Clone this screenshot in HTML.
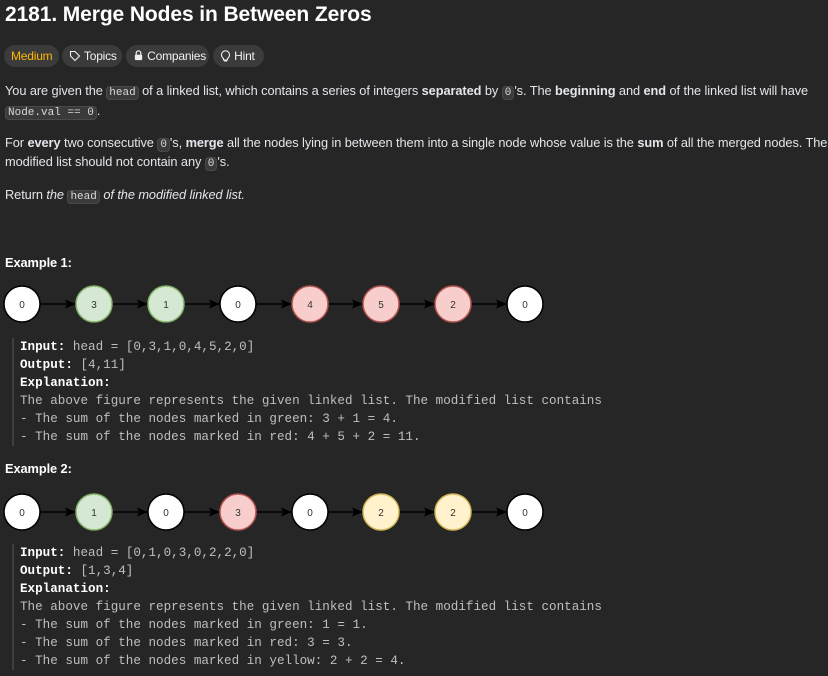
<!DOCTYPE html>
<html><head><meta charset="utf-8"><style>
body{margin:0;background:#262626;color:#eff1f6;font-family:"Liberation Sans",sans-serif;width:828px;height:676px;overflow:hidden;position:relative}
.a{position:absolute;white-space:nowrap}
h1{position:absolute;left:5px;top:3px;margin:0;font-size:21px;font-weight:bold;color:#fff;letter-spacing:-0.1px}
.tag{position:absolute;top:45px;height:22px;border-radius:11px;background:#3b3b3b;font-size:12px;line-height:22px;padding:0 7px;box-sizing:border-box;white-space:nowrap;letter-spacing:-0.2px}
p{position:absolute;left:5px;margin:0;font-size:12.8px;letter-spacing:-0.08px;line-height:19px;color:#eff1f6f0;white-space:nowrap}
code{font-family:"Liberation Mono",monospace;font-size:11px;letter-spacing:0;background:#3a3a3a;border:1px solid #4a4a4a;border-radius:4px;padding:0 2px;color:#d8d8d8}
.pre{position:absolute;left:12px;border-left:2px solid #3e3e3e;padding-left:6px;font-family:"Liberation Mono",monospace;font-size:12.6px;line-height:18px;color:#bfbfbf;white-space:pre}
.pre b{color:#fff}
</style></head><body>
<h1>2181. Merge Nodes in Between Zeros</h1>
<div class="tag" style="left:4px;width:55px;color:#ffb800">Medium</div>
<div class="tag" style="left:62px;width:60px">
<svg width="12" height="12" viewBox="0 0 12 12" style="vertical-align:-2px"><path d="M1.5 1.5h4.5l4.5 4.5-4.5 4.5-4.5-4.5z" fill="none" stroke="#eee" stroke-width="1.1"/></svg> Topics</div>
<div class="tag" style="left:126px;width:83px"><svg width="11" height="11" viewBox="0 0 12 12" style="vertical-align:-1px"><path d="M3.5 5V3.5a2.5 2.5 0 015 0V5" fill="none" stroke="#eee" stroke-width="1.4"/><rect x="2" y="5" width="8" height="6" rx="1" fill="#eee"/></svg> Companies</div>
<div class="tag" style="left:213px;width:51px"><svg width="11" height="12" viewBox="0 0 11 12" style="vertical-align:-2px"><path d="M3.5 8.5C2 7.5 1.5 6 1.5 4.8a4 4 0 018 0c0 1.2-.5 2.7-2 3.7v1.5h-4z M4 11h3" fill="none" stroke="#eee" stroke-width="1.1"/></svg> Hint</div>
<p style="top:81px">You are given the <code>head</code> of a linked list, which contains a series of integers <b>separated</b> by <code>0</code>'s. The <b>beginning</b> and <b>end</b> of the linked list will have</p>
<p style="top:101px"><code>Node.val == 0</code>.</p>
<p style="top:133px">For <b>every</b> two consecutive <code>0</code>'s, <b>merge</b> all the nodes lying in between them into a single node whose value is the <b>sum</b> of all the merged nodes. The</p>
<p style="top:152px">modified list should not contain any <code>0</code>'s.</p>
<p style="top:185px">Return <i>the</i> <code>head</code> <i>of the modified linked list.</i></p>
<p style="top:253px;font-weight:bold;color:#fff">Example 1:</p>
<svg class="a" style="left:0;top:284px" width="560" height="42">
<defs><marker id="m" markerUnits="userSpaceOnUse" markerWidth="11" markerHeight="9" refX="11" refY="4.5" orient="auto"><path d="M0 0L11 4.5L0 9L2 4.5z" fill="#000"/></marker></defs>
<g stroke="#000" stroke-width="1.5" marker-end="url(#m)">
<line x1="40" y1="20" x2="76" y2="20"/><line x1="112" y1="20" x2="148" y2="20"/><line x1="184" y1="20" x2="220" y2="20"/><line x1="256" y1="20" x2="292" y2="20"/><line x1="328" y1="20" x2="363" y2="20"/><line x1="399" y1="20" x2="435" y2="20"/><line x1="471" y1="20" x2="507" y2="20"/></g>
<g stroke-width="1.5" font-family="Liberation Sans" font-size="10" text-anchor="middle" fill="#333">
<circle cx="22" cy="20" r="18" fill="#fff" stroke="#000"/><circle cx="94" cy="20" r="18" fill="#d5e8d4" stroke="#82b366"/><circle cx="166" cy="20" r="18" fill="#d5e8d4" stroke="#82b366"/><circle cx="238" cy="20" r="18" fill="#fff" stroke="#000"/><circle cx="310" cy="20" r="18" fill="#f8cecc" stroke="#b85450"/><circle cx="381" cy="20" r="18" fill="#f8cecc" stroke="#b85450"/><circle cx="453" cy="20" r="18" fill="#f8cecc" stroke="#b85450"/><circle cx="525" cy="20" r="18" fill="#fff" stroke="#000"/>
<g stroke="none"><text x="22" y="24">0</text><text x="94" y="24">3</text><text x="166" y="24">1</text><text x="238" y="24">0</text><text x="310" y="24">4</text><text x="381" y="24">5</text><text x="453" y="24">2</text><text x="525" y="24">0</text></g></g></svg>
<div class="pre" style="top:338px"><b>Input:</b> head = [0,3,1,0,4,5,2,0]
<b>Output:</b> [4,11]
<b>Explanation:</b>
The above figure represents the given linked list. The modified list contains
- The sum of the nodes marked in green: 3 + 1 = 4.
- The sum of the nodes marked in red: 4 + 5 + 2 = 11.</div>
<p style="top:459px;font-weight:bold;color:#fff">Example 2:</p>
<svg class="a" style="left:0;top:492px" width="560" height="42">
<g stroke="#000" stroke-width="1.5" marker-end="url(#m)">
<line x1="40" y1="20" x2="76" y2="20"/><line x1="112" y1="20" x2="148" y2="20"/><line x1="184" y1="20" x2="220" y2="20"/><line x1="256" y1="20" x2="292" y2="20"/><line x1="328" y1="20" x2="363" y2="20"/><line x1="399" y1="20" x2="435" y2="20"/><line x1="471" y1="20" x2="507" y2="20"/></g>
<g stroke-width="1.5" font-family="Liberation Sans" font-size="10" text-anchor="middle" fill="#333">
<circle cx="22" cy="20" r="18" fill="#fff" stroke="#000"/><circle cx="94" cy="20" r="18" fill="#d5e8d4" stroke="#82b366"/><circle cx="166" cy="20" r="18" fill="#fff" stroke="#000"/><circle cx="238" cy="20" r="18" fill="#f8cecc" stroke="#b85450"/><circle cx="310" cy="20" r="18" fill="#fff" stroke="#000"/><circle cx="381" cy="20" r="18" fill="#fff2cc" stroke="#d6b656"/><circle cx="453" cy="20" r="18" fill="#fff2cc" stroke="#d6b656"/><circle cx="525" cy="20" r="18" fill="#fff" stroke="#000"/>
<g stroke="none"><text x="22" y="24">0</text><text x="94" y="24">1</text><text x="166" y="24">0</text><text x="238" y="24">3</text><text x="310" y="24">0</text><text x="381" y="24">2</text><text x="453" y="24">2</text><text x="525" y="24">0</text></g></g></svg>
<div class="pre" style="top:544px"><b>Input:</b> head = [0,1,0,3,0,2,2,0]
<b>Output:</b> [1,3,4]
<b>Explanation:</b>
The above figure represents the given linked list. The modified list contains
- The sum of the nodes marked in green: 1 = 1.
- The sum of the nodes marked in red: 3 = 3.
- The sum of the nodes marked in yellow: 2 + 2 = 4.</div>
</body></html>
